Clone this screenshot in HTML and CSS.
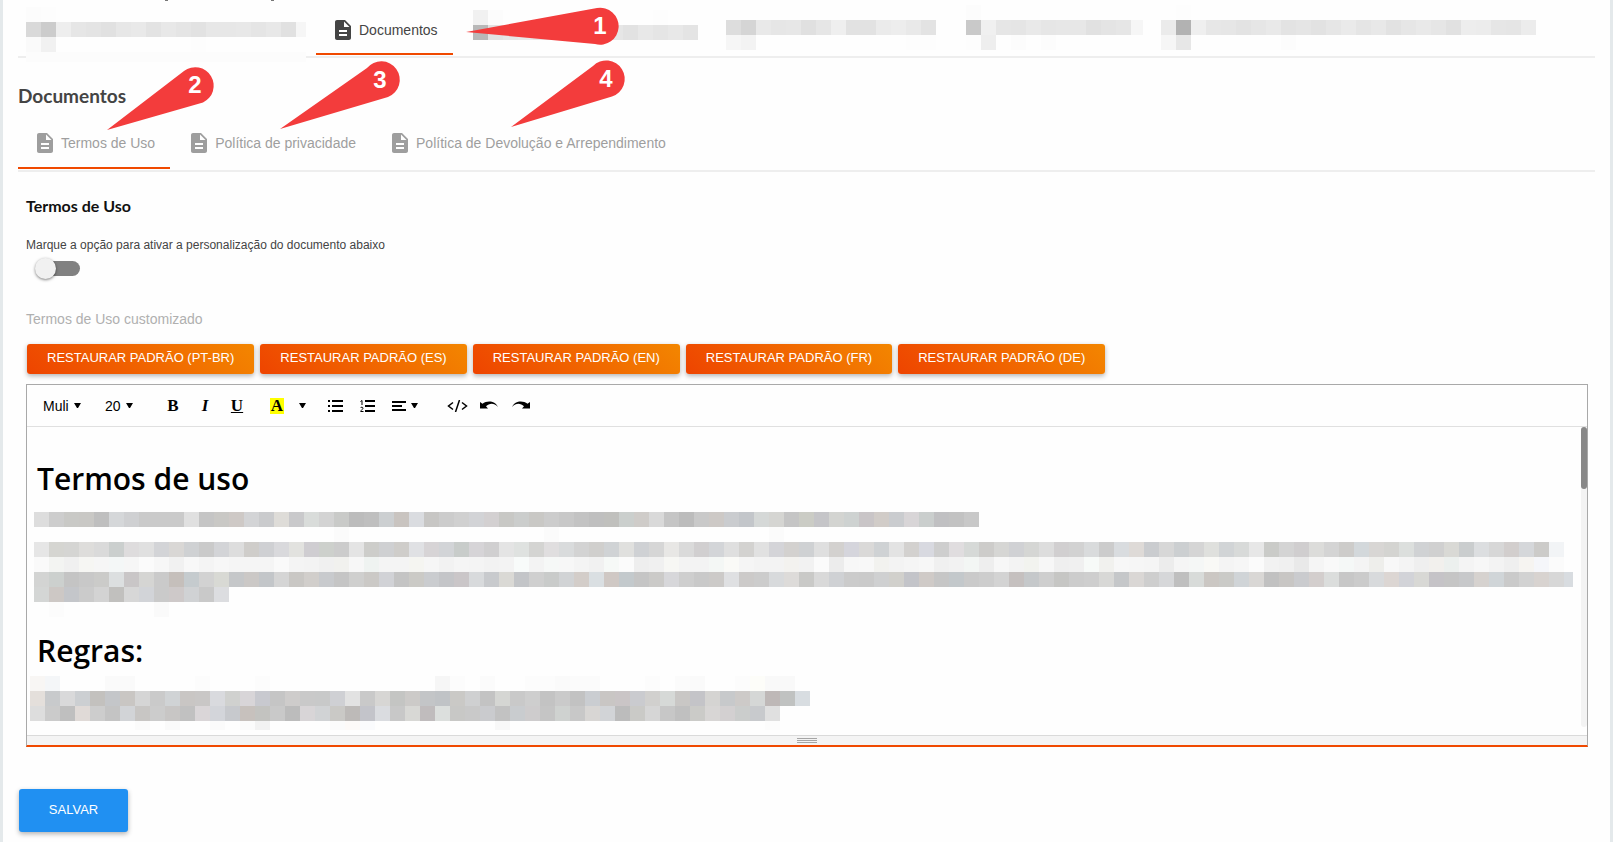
FILE: index.html
```html
<!DOCTYPE html>
<html lang="pt-BR">
<head>
    <meta charset="UTF-8">
    <meta name="viewport" content="width=device-width, initial-scale=1.0">
    <title>Documentos</title>
    <link rel="stylesheet" href="styles.css">
</head>
<body>
    <svg class="sprite" aria-hidden="true">
        <symbol id="doc" viewBox="0 0 24 24">
            <path d="M14 2H6c-1.1 0-1.99.9-1.99 2L4 20c0 1.1.89 2 1.99 2H18c1.1 0 2-.9 2-2V8l-6-6zm2 16H8v-2h8v2zm0-4H8v-2h8v2zm-3-5V3.5L18.500 9H13z"/>
        </symbol>
        <symbol id="caret" viewBox="0 0 7 5">
            <path d="M0 0h7L4 5H3z"/>
        </symbol>
    </svg>

    <main class="page">
        <!-- abas principais -->
        <nav class="tabs tabs-main">
            <a href="#" class="tab tab-hidden" aria-label="Aba oculta"><svg class="mosaic" data-mosaic="tab1" width="280" height="56"></svg></a>
            <a href="#" class="tab active"><svg class="icon"><use href="#doc"/></svg>Documentos</a>
            <a href="#" class="tab tab-hidden" aria-label="Aba oculta"><svg class="mosaic" data-mosaic="tab2" width="245" height="56"></svg></a>
            <a href="#" class="tab tab-hidden" aria-label="Aba oculta"><svg class="mosaic" data-mosaic="tab3" width="222" height="56"></svg></a>
            <a href="#" class="tab tab-hidden" aria-label="Aba oculta"><svg class="mosaic" data-mosaic="tab4" width="177" height="56"></svg></a>
            <a href="#" class="tab tab-hidden" aria-label="Aba oculta"><svg class="mosaic" data-mosaic="tab5" width="375" height="56"></svg></a>
        </nav>

        <h2 class="page-title">Documentos</h2>

        <nav class="tabs tabs-docs">
            <a href="#termos" class="tab active"><svg class="icon"><use href="#doc"/></svg>Termos de Uso</a>
            <a href="#privacidade" class="tab"><svg class="icon"><use href="#doc"/></svg>Política de privacidade</a>
            <a href="#devolucao" class="tab"><svg class="icon"><use href="#doc"/></svg>Política de Devolução e Arrependimento</a>
        </nav>

        <form class="panel" id="termos">
            <h3 class="panel-title">Termos de Uso</h3>

            <label class="switch-label" for="ativar">Marque a opção para ativar a personalização do documento abaixo</label>
            <input type="checkbox" class="switch" id="ativar">

            <p class="field-label">Termos de Uso customizado</p>

            <div class="restore">
                <button type="button" class="btn">RESTAURAR PADRÃO (PT-BR)</button>
                <button type="button" class="btn">RESTAURAR PADRÃO (ES)</button>
                <button type="button" class="btn">RESTAURAR PADRÃO (EN)</button>
                <button type="button" class="btn">RESTAURAR PADRÃO (FR)</button>
                <button type="button" class="btn">RESTAURAR PADRÃO (DE)</button>
            </div>

            <div class="editor">
                <div class="toolbar">
                    <div class="group group-font">
                        <label class="picker">
                            <select aria-label="Fonte"><option>Muli</option></select>
                            <svg class="caret"><use href="#caret"/></svg>
                        </label>
                        <label class="picker">
                            <select aria-label="Tamanho"><option>20</option></select>
                            <svg class="caret"><use href="#caret"/></svg>
                        </label>
                    </div>
                    <div class="group">
                        <button type="button" class="tool serif" aria-label="Negrito"><b>B</b></button>
                        <button type="button" class="tool serif" aria-label="Itálico"><b><i>I</i></b></button>
                        <button type="button" class="tool serif" aria-label="Sublinhado"><b><u>U</u></b></button>
                    </div>
                    <div class="group">
                        <button type="button" class="tool serif" aria-label="Cor"><b class="mark">A</b></button>
                        <button type="button" class="tool tool-caret" aria-label="Mais cores"><svg class="caret"><use href="#caret"/></svg></button>
                    </div>
                    <div class="group">
                        <button type="button" class="tool" aria-label="Lista">
                            <svg width="15" height="12"><path d="M0 0h2v2H0zM4 0h11v2H4zM0 5h2v2H0zM4 5h11v2H4zM0 10h2v2H0zM4 10h11v2H4z"/></svg>
                        </button>
                        <button type="button" class="tool" aria-label="Lista numerada">
                            <svg width="15" height="12">
                                <path d="M5 0h10v2H5zM5 5h10v2H5zM5 10h10v2H5z"/>
                                <path class="line" d="M.5 1.500L2 .5V5M.5 8C1 6.800 3 7 3 8.200C3 9.300 1 10 .7 11.500H3.500"/>
                            </svg>
                        </button>
                        <button type="button" class="tool tool-align" aria-label="Alinhamento">
                            <svg width="14" height="12"><path d="M0 1h14v2H0zM0 5h10v2H0zM0 9h14v2H0z"/></svg>
                            <svg class="caret"><use href="#caret"/></svg>
                        </button>
                    </div>
                    <div class="group">
                        <button type="button" class="tool" aria-label="Código">
                            <svg width="21" height="12"><path class="line thick" d="M6 2.500L1.500 6L6 9.500M12.500 0L8.500 12M15 2.500L19.500 6L15 9.500"/></svg>
                        </button>
                        <button type="button" class="tool" aria-label="Desfazer">
                            <svg width="18" height="10"><path d="M0 1L2.500 2.800C7-.8 15-.5 18 6C14 1.500 9.500 1.800 6 5.200L8 7.500H0z"/></svg>
                        </button>
                        <button type="button" class="tool" aria-label="Refazer">
                            <svg width="18" height="10"><path d="M18 1L15.500 2.800C11-.8 3-.5 0 6C4 1.500 8.500 1.800 12 5.200L10 7.500H18z"/></svg>
                        </button>
                    </div>
                </div>

                <div class="content">
                    <h1>Termos de uso</h1>
                    <svg class="mosaic text-a" data-mosaic="text1" width="1539" height="105"></svg>
                    <h1>Regras:</h1>
                    <svg class="mosaic text-b" data-mosaic="text2" width="780" height="54"></svg>
                    <div class="scroll"><div class="thumb"></div></div>
                </div>

                <div class="resizer">
                    <svg width="20" height="6"><path d="M0 0h20v1H0zM0 2h20v1H0zM0 4h20v1H0z"/></svg>
                </div>
            </div>

            <button type="submit" class="btn btn-save">SALVAR</button>
        </form>

        <!-- setas numeradas por cima das abas -->
        <svg class="callouts" width="700" height="140">
            <path class="cut" d="M165 0h3v1h-3zM271 0h3v1h-3z"/>
            <path d="M466 32L597 8A18.500 18.500 0 1 1 595 44z"/>
            <path d="M107 130L184 71A18.500 18.500 0 1 1 203 102.500z"/>
            <path d="M280 129L367 68A18.500 18.500 0 1 1 388 97z"/>
            <path d="M511 127L593 66A18.500 18.500 0 1 1 612 96.500z"/>
            <text x="600" y="34">1</text>
            <text x="195" y="93">2</text>
            <text x="380" y="88">3</text>
            <text x="606" y="87">4</text>
        </svg>
    </main>

    <script src="mosaic.js"></script>
</body>
</html>
```
FILE: styles.css
```css
* {
    box-sizing: border-box;
}

body {
    margin: 0;
    background: #e4e9eb;
    font-family: "Liberation Sans", Arial, sans-serif;
    font-size: 14px;
    color: #444;
}

.sprite {
    position: absolute;
    width: 0;
    height: 0;
}

.page {
    position: relative;
    min-height: 100vh;
    margin: 0 3px;
    padding: 0 15px 10px;
    background: #fefefe;
    overflow: hidden;
}

h1, h2, h3, p {
    margin: 0;
}

/* abas */
.tabs {
    display: flex;
    gap: 2px;
    border-bottom: 2px solid #eee;
}

.tab {
    display: flex;
    align-items: center;
    gap: 4px;
    margin-bottom: 1px;
    padding: 0 15px;
    border-bottom: 2px solid transparent;
    color: #9e9e9e;
    text-decoration: none;
    white-space: nowrap;
}

.tab.active {
    border-bottom-color: #f04900;
}

.tabs-main .active {
    color: #444;
}

.tabs-docs .tab {
    height: 50px;
}

.tabs-main .tab {
    height: 55px;
    padding-top: 7px;
}

.tabs-main .tab-hidden {
    padding: 0 8px;
    border: 0;
}

.icon {
    width: 24px;
    height: 24px;
    fill: currentColor;
}

.mosaic {
    display: block;
    flex: none;
    overflow: visible;
    shape-rendering: crispEdges;
}

.page-title {
    padding: 26px 0 11px;
    font: 700 19px/24px Lato, sans-serif;
    color: #444;
}

/* painel */
.panel {
    padding: 24px 7px 0 8px;
}

.panel-title {
    font: 700 16px/20px Lato, sans-serif;
    color: #111;
}

.switch-label {
    display: block;
    margin-top: 21px;
    font-size: 12px;
    line-height: 16px;
}

.switch {
    appearance: none;
    position: relative;
    display: block;
    width: 38px;
    height: 15px;
    margin: 8px 0 0 16px;
    border-radius: 8px;
    background: #818181;
}

.switch::before {
    content: "";
    position: absolute;
    top: -3px;
    left: -7px;
    width: 21px;
    height: 21px;
    border-radius: 50%;
    background: #f1f1f1;
    box-shadow: 0 1px 3px rgba(0, 0, 0, 0.5);
}

.field-label {
    margin-top: 34px;
    line-height: 18px;
    color: #b0b0b0;
}

.btn {
    height: 30px;
    padding: 0 20px 2px;
    border: 0;
    border-radius: 3px;
    background: linear-gradient(45deg, #ee4400, #f38600);
    box-shadow: 0 2px 5px rgba(0, 0, 0, 0.3);
    color: #fff;
    font: 500 13px/20px "Liberation Sans", Arial, sans-serif;
    white-space: nowrap;
}

.restore {
    display: flex;
    gap: 6px;
    padding: 16px 1px 10px;
}

/* editor */
.editor {
    border: 1px solid #a9a9a9;
    border-bottom: 2px solid #f04900;
}

.toolbar {
    display: flex;
    align-items: center;
    gap: 8px;
    height: 42px;
    border-bottom: 1px solid #e0e0e0;
    color: #000;
}

.group {
    display: flex;
    align-items: center;
}

.group-font {
    gap: 24px;
    padding: 0 16px;
}

.picker {
    display: flex;
    align-items: center;
    gap: 5px;
}

.picker select {
    appearance: none;
    padding: 0;
    border: 0;
    background: none;
    color: #000;
    font: 14px/20px "Liberation Sans", Arial, sans-serif;
}

.caret {
    width: 7px;
    height: 5px;
}

.tool {
    display: flex;
    align-items: center;
    justify-content: center;
    width: 32px;
    height: 30px;
    padding: 0;
    border: 0;
    background: none;
    color: #000;
}

.tool-caret {
    width: 18px;
}

.tool-align {
    gap: 5px;
    width: 50px;
    padding-right: 6px;
}

.serif {
    font: 17px/18px "Liberation Serif", "Times New Roman", serif;
}

.mark {
    width: 14px;
    line-height: 16px;
    background: #ff0;
}

.line {
    fill: none;
    stroke: #000;
}

.thick {
    stroke-width: 1.5;
}

.content {
    position: relative;
    height: 308px;
    padding: 32px 10px 0;
    overflow: hidden;
}

.content h1 {
    font: 600 30px/40px "Open Sans", sans-serif;
    color: #000;
}

.text-a {
    margin: 13px 0 14px -3px;
}

.text-b {
    margin: 5px 0 0 -7px;
}

.scroll {
    position: absolute;
    top: 0;
    right: 0;
    width: 6px;
    height: 300px;
    border-radius: 3px;
    background: #f3f3f3;
}

.thumb {
    height: 62px;
    border-radius: 3px;
    background: #888;
}

.resizer {
    display: flex;
    justify-content: center;
    height: 10px;
    padding-top: 2px;
    border-top: 1px solid #dadada;
    background: #f4f4f4;
    fill: #a5a5a5;
}

.btn-save {
    width: 109px;
    height: 43px;
    margin: 42px 0 0 -7px;
    background: #2090f2;
}

/* setas */
.callouts {
    position: absolute;
    top: 0;
    left: -3px;
    fill: #f33c3c;
    pointer-events: none;
}

.callouts text {
    fill: #fff;
    font: 700 24px "Liberation Sans", Arial, sans-serif;
    text-anchor: middle;
}

.callouts .cut {
    fill: #777;
}
```
FILE: mosaic.js
```js
// Cada linha: [x, y, tons]. Tom com 2 dígitos = cinza, 6 = cor, "-" = vazio
const CELL = 15;

const mosaics = {
    tab1: [
        [0, 7, 'fc fd'],
        [0, 22, 'd9 cc ee e6 e4 e1 e7 e9 e3 e8 e5 e2 e7 e7 e8 e5 e8 e1 f6'],
        [0, 37, 'fa f1 - - - - - - - - - fd'],
        [0, 52, 'fc fc fc fc fc fc fc fc fc fc fc fc fc fc fc fc fc fc fc', 10]
    ],
    tab2: [
        [10, 10, 'f1 fc - - - - - - - - - - fd'],
        [10, 25, 'b8 e2 e6 e8 e5 e6 e8 e4 e8 e6 e2 e8 e5 e8 e4']
    ],
    tab3: [
        [0, 20, 'dd d5 e9 e6 e7 e0 e6 ef e2 e2 eb ed e9 e3'],
        [0, 35, 'f6 f3 - - - - - - - - - - fd fd']
    ],
    tab4: [
        [0, 5, 'fc'],
        [0, 20, 'c9 f0 e6 e5 e9 e6 e7 e7 e1 e4 e6 f6'],
        [0, 35, 'fd ee - fc - fc']
    ],
    tab5: [
        [0, 5, '- fd'],
        [0, 20, 'eb b2 ef e7 e6 e3 e6 e9 e3 e5 e2 e6 ea e5 e8 e2 e6 e9 e6 e1 ed ec e6 e5 ec'],
        [0, 35, 'f6 e7 - - - - - - fc']
    ],
    text1: [
        [0, 0, 'dd cd c9c9c6 c9c8c5 bf d5d7d9 cfd0d2 ca ca ca e0 c5 c9c8c5 cec9c6 d3d4d6 cacbcd dedcd8 c9c9cb d9dcda d3 c9cac8 bc bf cccfd1 c9c4c0 dadce0 c7c6c4 cc d0 d2d3d6 d3d0d1 c8c8c5 cbcdcc c9c8c5 cc c8 c3 bf c0c0bd cbcfcd cfccc9 d9 c5 bc c9 cdc9c6 cacccf c3c6ca d5d8d7 d5d5d2 c5 cbccc5 c5c5c8 d3d4d1 ced2d1 c9c5c7 d1ccc8 cacccf d8d5d7 cacecd c0c0c2 c2 c8'],
        [300, 15, 'fb'],
        [510, 15, 'fb'],
        [735, 15, 'fb'],
        [0, 30, 'e6 d5d5d1 d5d5d3 dedddb da cbcfce dedcdd e0 d3d4d7 d9d7d5 cfd1d3 ca d3d4d7 dd cfcdca cfd0d3 d9d9dc e2e2df cfcdd1 cdd0cc cc e4 cdcdca cfd0d2 cfcdca e0e1e4 d7d4d6 d2d4d7 c8ccca d6d4d7 d0cfd0 e4 dfe2e0 d4d4d2 e0dedf d9dbdc d3 d0cfcd d0d3d5 e0e0de cfd1d4 d6 e8e7e5 da d1cfd0 d3d5d8 df d3d2d0 e1 d4d4d8 d3d1cf cfd1d3 df d3d1cf d5d5dc dad9d8 cfd2d4 e3 d3d1cf d8d9e0 ce e0dddf d6d9d7 cdccca d6d6d4 d0d1d4 d5d6d4 dd d1cfd0 d2 d9dbdc cc d9dcdf dedad7 cacccf d7 cccfd1 d5 dfe0dd d1d4d6 d8dad9 e7 cacbc8 d4 d0cecf dcdcda d4 cdccca d3d8db d8d6d4 d4d4d1 dcdfdd d0d2d4 d0 d9d9d5 cacdce dcdee0 d7 d2cecd d5d7da cccbc9 f2f4f6'],
        [0, 45, 'fa f3f4f2 f0 f6f6f3 f6 f4f7f7 f6 fb f7 f1 f8 f4 f7 f5 f5 f5 fa f4 f3 f0 f1f1ee f7 eff3f1 f4 f4 f5f5f1 f6 f2 f5 f4 f2 f3 f8fbfa f3 f6f8f7 f7 f4 f1 f6f9f7 fb ee f0 f7f7f4 f3 f3 f4f7f5 fafaf7 f5 f3 f3 f3f2ef f2 fb ec f7 f8 f2f2ef f3 f5 f7 f0 f2 f3f6f4 ee f7 f3 f2f3ef f7 ef f0 f7faf8 f1f1ee f7 f6 f5 ec f5 f5f7f6 f9f9f6 f4 f6 fb f2 f0 e9 f5 f9 f5f8f7 f4 eeeeeb f8 f4 ef f2f0ed ecf0ee f4 f7 f3 ef f6f4f1 f5f6fa fb'],
        [0, 60, 'd3d4d3 ccd0ce c4 c8 cbcbc9 dcdfe0 c9c6c7 d5d5d3 ca c5bfbb c5cbce d2 d8d9d4 c5c7c9 cbc8c6 c3c6c9 d5 c9c7c4 d1cecb c8cacd c5 cfcfce cbc9c6 d1d2d6 c4 cbcac6 cacccf c4c5c8 cac6c8 d8dadc c8cacd dad9d5 c3c5c8 cf c9cbca d1d3d5 d3cdc9 dadfe2 cfc8c4 c3c9cc c5 cbcac8 d7d7da ce c9 cccac8 dfe0e2 cccac9 cc d8dadc dddbd9 c9c9c7 d9 cfd1d4 cb ca cfd0d1 d1d0cc c3c4c9 cfcac7 c6 c3c8cb ca cd d3 c5c0bf c5c8ca ce c6c6c4 cc ce d8d8d6 c5c7c9 dad7d5 ce d6d7d9 bf d8dbd9 cbc7c3 cacac7 d0d4d7 d9d7d5 c1 c8c6c4 cacbce d3cecd dbdddc c7 cb d8dadc dcd6d3 d2d3d8 d8d8d5 c5c3c7 c5 c7c8ca d6d2cf d0d5d8 ca d2 d8d3d0 d7 d8dce0'],
        [0, 75, 'd4d6d5 cdc8c5 c4c6ca cb d3 c1c0be d7 d2d4d8 ca cec9c9 d0d2d4 c9 dcdde0'],
        [15, 90, 'fc - - - - - - fa']
    ],
    text2: [
        [0, 0, 'f8f6f4 f4f6f8 - - - fa fa - - - - fc - - - fc - - - - - - - - - - - f6 fc - fb - - fc fc fa fb fb - - - fc - fb fa - - fc fdfdf9 f9 f9'],
        [0, 15, 'e4dfdb c8cacc d9d9da cccfd2 c3c1be c4c6c9 c9c6c3 d5 ca d0d3d5 c9c6c4 c9c7c6 d9dade d0d1cf d8d5d8 c8c9cf c5 cecccb c9 c8c9c9 cfd0d4 e2 c9 d7d6d4 c4c5c3 cccac8 c3c5c7 c0c3c6 cac9c6 cfd0d1 c3 d5d6d3 c9 ce c3 ca c2 cacdd1 c9c6c4 cac5c6 cacbcf d1d0ce d6d9d7 c9c7c5 c4c4c8 d5d4d2 c7c9cb cdcac8 d5d7d6 beb8b7 c0c2c1 d8dde1'],
        [0, 30, 'dd cb bf e0dad7 cd c4 d2d4d7 c8c6c4 cc c8c6c5 c1 dad6d8 d3d5da c7c9cd c7c1bd c3c3c0 c9 bc d8d5d7 d1d3d5 cac9c6 bdbab8 c3c4ca dadce0 c8 d8d8d5 c0bcbd dcdfdd c8c8c6 c9 cacbce c2 c9cccf cecccd c5 cfd2d0 c8 d8d6d4 d2d4d7 bc cacac7 d6 c7 c0 cbcbc8 d8d6d5 d3d0d1 cbcdcc c8cacd e0'],
        [0, 45, '- - - - - - - fb - fa - - fb - fb f2 - - - - fb fdfaf8 fafbfd - - - - - - - - f8 - - - - - - - - - - - - - - - - - fc', 9]
    ]
};

document.querySelectorAll('[data-mosaic]').forEach(svg => {
    const limit = Number(svg.getAttribute('width'));
    mosaics[svg.dataset.mosaic].forEach(([x, y, tones, height = CELL]) => {
        tones.split(' ').forEach((tone, i) => {
            if (tone === '-') return;
            const left = x + i * CELL;
            const rect = document.createElementNS('http://www.w3.org/2000/svg', 'rect');
            rect.setAttribute('x', left);
            rect.setAttribute('y', y);
            rect.setAttribute('width', Math.min(CELL, limit - left));
            rect.setAttribute('height', height);
            rect.setAttribute('fill', '#' + (tone.length === 2 ? tone.repeat(3) : tone));
            svg.appendChild(rect);
        });
    });
});
```
